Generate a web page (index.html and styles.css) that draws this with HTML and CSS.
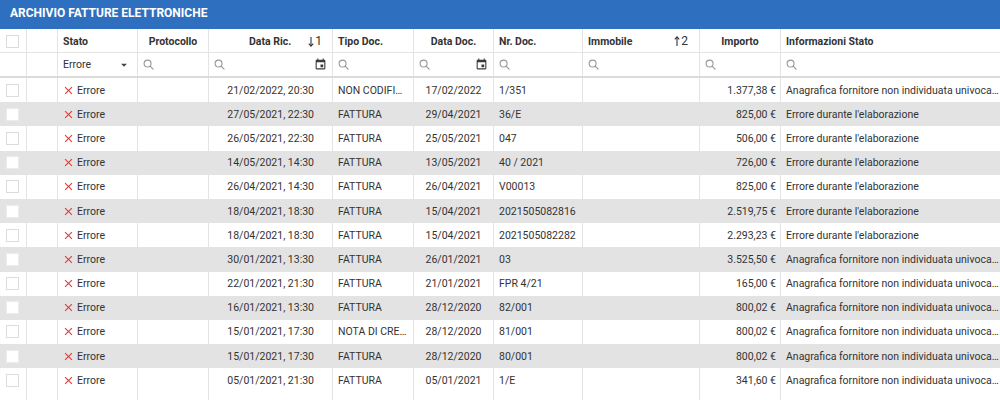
FILE: index.html
```html
<!DOCTYPE html>
<html lang="it">
<head>
<meta charset="utf-8">
<title>Archivio fatture elettroniche</title>
<link rel="stylesheet" href="styles.css">
</head>
<body>
<svg width="0" height="0" class="defs" aria-hidden="true">
  <defs>
    <symbol id="i-search" viewBox="0 0 12 12"><circle cx="5" cy="5" r="3.8" fill="none" stroke="currentColor" stroke-width="1.2"/><line x1="7.8" y1="7.8" x2="11" y2="11" stroke="currentColor" stroke-width="1.3" stroke-linecap="round"/></symbol>
    <symbol id="i-cal" viewBox="0 0 24 24"><path d="M17 12h-5v5h5v-5zM16 1v2H8V1H6v2H5c-1.11 0-1.990.9-1.99 2L3 19c0 1.1.89 2 2 2h14c1.1 0 2-.9 2-2V5c0-1.1-.9-2-2-2h-1V1h-2zm3 18H5V8h14v11z" fill="currentColor"/></symbol>
    <symbol id="i-x" viewBox="0 0 24 24"><path d="M19 6.41L17.590 5 12 10.59 6.41 5 5 6.41 10.59 12 5 17.59 6.41 19 12 13.41 17.59 19 19 17.59 13.41 12z" fill="currentColor"/></symbol>
    <symbol id="i-drop" viewBox="0 0 24 24"><path d="M7 10l5 5 5-5z" fill="currentColor"/></symbol>
    <symbol id="i-down" viewBox="0 0 6 12"><line x1="3" y1="1" x2="3" y2="11" stroke="currentColor" stroke-width="1.2"/><polyline points="0.6,8.4 3,11 5.4,8.4" fill="none" stroke="currentColor" stroke-width="1.2"/></symbol>
    <symbol id="i-up" viewBox="0 0 6 12"><line x1="3" y1="1" x2="3" y2="11" stroke="currentColor" stroke-width="1.2"/><polyline points="0.6,3.6 3,1 5.4,3.6" fill="none" stroke="currentColor" stroke-width="1.2"/></symbol>
  </defs>
</svg>

<div class="panel">
  <div class="titlebar">ARCHIVIO FATTURE ELETTRONICHE</div>

  <div class="grid">
    <div class="row head">
      <div class="c"><span class="cb"></span></div>
      <div class="c"></div>
      <div class="c left">Stato</div>
      <div class="c center">Protocollo</div>
      <div class="c right sorted">Data Ric.<span class="sort"><svg class="arr"><use href="#i-down"/></svg>1</span></div>
      <div class="c left">Tipo Doc.</div>
      <div class="c center">Data Doc.</div>
      <div class="c left">Nr. Doc.</div>
      <div class="c left sorted-l">Immobile<span class="sort"><svg class="arr"><use href="#i-up"/></svg>2</span></div>
      <div class="c center">Importo</div>
      <div class="c left">Informazioni Stato</div>
    </div>

    <div class="row filter">
      <div class="c"></div>
      <div class="c"></div>
      <div class="c left select">Errore<svg class="drop"><use href="#i-drop"/></svg></div>
      <div class="c left"><svg class="search"><use href="#i-search"/></svg></div>
      <div class="c left split"><svg class="search"><use href="#i-search"/></svg><svg class="cal"><use href="#i-cal"/></svg></div>
      <div class="c left"><svg class="search"><use href="#i-search"/></svg></div>
      <div class="c left split"><svg class="search"><use href="#i-search"/></svg><svg class="cal"><use href="#i-cal"/></svg></div>
      <div class="c left"><svg class="search"><use href="#i-search"/></svg></div>
      <div class="c left"><svg class="search"><use href="#i-search"/></svg></div>
      <div class="c left"><svg class="search"><use href="#i-search"/></svg></div>
      <div class="c left"><svg class="search"><use href="#i-search"/></svg></div>
    </div>

    <div class="body" id="body"></div>
  </div>
</div>

<script>
  var rows = [
    ["21/02/2022, 20:30","NON CODIFICATO","17/02/2022","1/351","1.377,38 €","A"],
    ["27/05/2021, 22:30","FATTURA","29/04/2021","36/E","825,00 €","E"],
    ["26/05/2021, 22:30","FATTURA","25/05/2021","047","506,00 €","E"],
    ["14/05/2021, 14:30","FATTURA","13/05/2021","40 / 2021","726,00 €","E"],
    ["26/04/2021, 14:30","FATTURA","26/04/2021","V00013","825,00 €","E"],
    ["18/04/2021, 18:30","FATTURA","15/04/2021","2021505082816","2.519,75 €","E"],
    ["18/04/2021, 18:30","FATTURA","15/04/2021","2021505082282","2.293,23 €","E"],
    ["30/01/2021, 13:30","FATTURA","26/01/2021","03","3.525,50 €","A"],
    ["22/01/2021, 21:30","FATTURA","21/01/2021","FPR 4/21","165,00 €","A"],
    ["16/01/2021, 13:30","FATTURA","28/12/2020","82/001","800,02 €","A"],
    ["15/01/2021, 17:30","NOTA DI CREDITO","28/12/2020","81/001","800,02 €","A"],
    ["15/01/2021, 17:30","FATTURA","28/12/2020","80/001","800,02 €","A"],
    ["05/01/2021, 21:30","FATTURA","05/01/2021","1/E","341,60 €","A"]
  ];
  var info = {
    A: "Anagrafica fornitore non individuata univocamente nel sistema",
    E: "Errore durante l'elaborazione"
  };
  var html = "";
  rows.forEach(function (r, i) {
    html += '<div class="row data' + (i % 2 ? ' alt' : '') + '">' +
      '<div class="c"><span class="cb"></span></div>' +
      '<div class="c"></div>' +
      '<div class="c left status"><svg class="x"><use href="#i-x"/></svg>Errore</div>' +
      '<div class="c"></div>' +
      '<div class="c right dr">' + r[0] + '</div>' +
      '<div class="c left"><span class="t">' + r[1] + '</span></div>' +
      '<div class="c center">' + r[2] + '</div>' +
      '<div class="c left">' + r[3] + '</div>' +
      '<div class="c"></div>' +
      '<div class="c right amt">' + r[4] + '</div>' +
      '<div class="c left last"><span class="t">' + info[r[5]] + '</span></div>' +
      '</div>';
  });
  html += '<div class="row data filler">' + '<div class="c"></div>'.repeat(11) + '</div>';
  document.getElementById("body").innerHTML = html;
</script>
</body>
</html>
```

FILE: styles.css
```css
* { box-sizing: border-box; }

html, body {
  margin: 0;
  padding: 0;
  background: #ffffff;
}

body {
  font-family: Roboto, "Liberation Sans", sans-serif;
  font-size: 10.5px;
  color: #333333;
  width: 1000px;
  height: 400px;
  overflow: hidden;
}

.defs { position: absolute; width: 0; height: 0; }

.panel {
  display: flex;
  flex-direction: column;
  height: 400px;
}

.titlebar {
  height: 29px;
  background: #2f6fbf;
  color: #ffffff;
  font-weight: 700;
  font-size: 12px;
  padding: 0 0 3px 10px;
  display: flex;
  align-items: center;
}

.grid {
  flex: 1;
  display: flex;
  flex-direction: column;
  overflow: hidden;
}

.row {
  display: grid;
  grid-template-columns: 27px 31px 80px 71px 124px 81px 80px 89px 117px 81px 1fr;
  flex: none;
}

.c {
  border-right: 1px solid #e3e3e3;
  display: flex;
  align-items: center;
  white-space: nowrap;
  overflow: hidden;
  min-width: 0;
  padding: 0 5px;
}

.c:last-child { border-right: none; }

.left { justify-content: flex-start; }
.center { justify-content: center; }
.right { justify-content: flex-end; }

.head {
  height: 24px;
  border-bottom: 1px solid #e3e3e3;
  font-weight: 700;
  color: #333333;
}

.head .c { padding-top: 1px; }

.sorted { padding-right: 10px; }
.sorted-l { padding-right: 11px; }
.sorted .sort { margin-left: 17px; }
.sorted-l .sort { margin-left: auto; }

.sort {
  display: inline-flex;
  align-items: center;
  font-weight: 400;
  font-size: 12px;
  color: #333333;
}

.arr {
  width: 6px;
  height: 11px;
  margin-right: 1px;
  color: #333333;
}

.filter {
  height: 25px;
  border-bottom: 2px solid #dadada;
}

.select { padding-right: 6px; justify-content: space-between; }

.drop {
  width: 14px;
  height: 14px;
  color: #444444;
}

.search {
  width: 11px;
  height: 11px;
  color: #9a9a9a;
}

.split { justify-content: space-between; padding-right: 5px; }

.cal {
  width: 13px;
  height: 13px;
  color: #3c3c3c;
}

.body {
  flex: 1;
  display: flex;
  flex-direction: column;
  overflow: hidden;
}

.data { height: 24.2px; }
.data.alt { background: #e3e3e3; }
.data.filler { flex: 1; height: auto; }

.cb {
  display: block;
  width: 13px;
  height: 13px;
  margin-left: 1px;
  background: #ffffff;
  border: 1px solid #dcdcdc;
}

.alt .cb { border-color: #ececec; }

.status { padding-left: 4px; }

.x {
  width: 13px;
  height: 13px;
  color: #e53935;
  margin-right: 2px;
}

.dr { padding-right: 18px; }
.amt { padding-right: 4px; }
.last { padding-right: 1px; }

.t {
  display: block;
  overflow: hidden;
  text-overflow: ellipsis;
  min-width: 0;
}
```
